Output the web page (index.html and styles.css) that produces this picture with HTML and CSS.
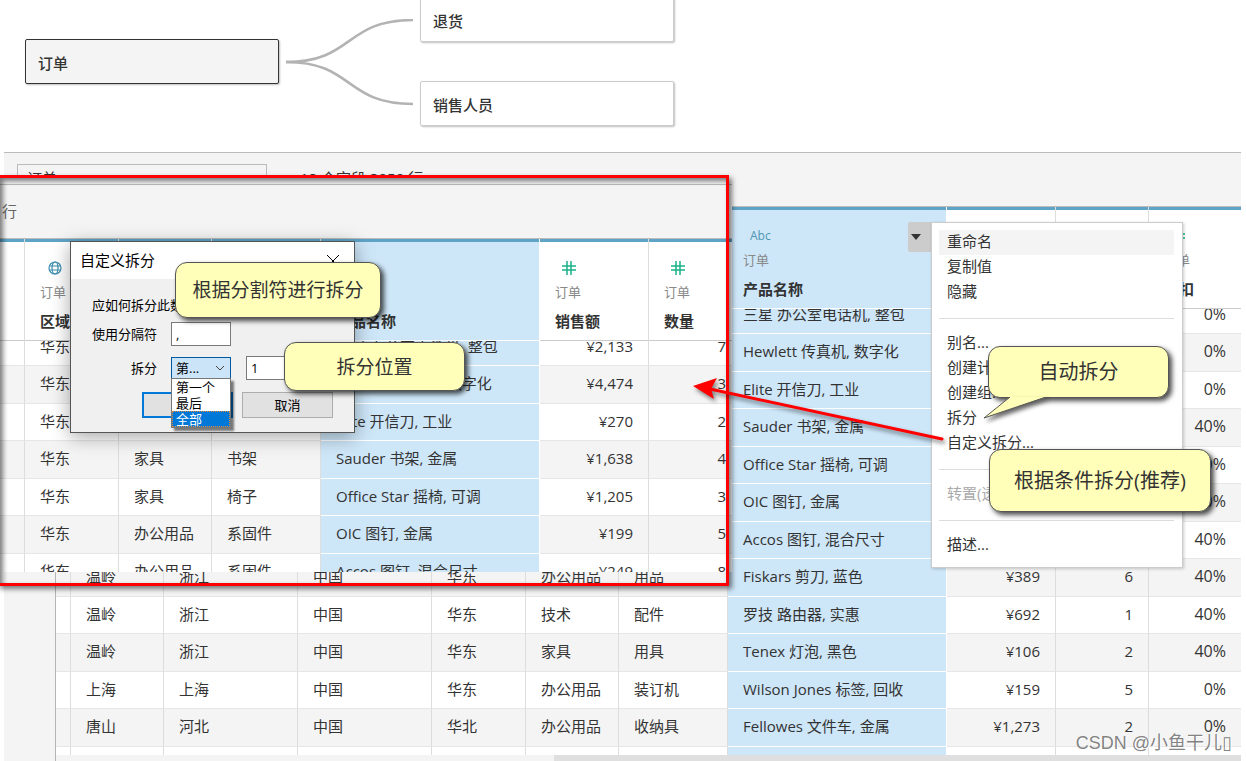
FILE: index.html
```html
<!DOCTYPE html>
<html lang="zh-CN">
<head>
    <meta charset="UTF-8">
    <meta name="viewport" content="width=device-width, initial-scale=1.0">
    <title>自定义拆分</title>
    <link rel="stylesheet" href="styles.css">
</head>
<body>
    <!-- Relationship canvas -->
    <div class="canvas">
        <svg class="noodles" width="130" height="90" viewBox="0 0 130 90">
            <path d="M2 43 C70 43 60 1 129 1"/>
            <path d="M2 43 C70 43 60 85 129 85"/>
        </svg>
        <div class="node node-main">订单</div>
        <div class="node node-returns">退货</div>
        <div class="node node-people">销售人员</div>
    </div>

    <!-- Data pane -->
    <div class="pane">
        <div class="pane-header">
            <div class="table-name">订单</div>
            <div class="row-count">18 个字段 3059 行</div>
        </div>
        <div class="grid-wrap">
            <table class="grid">
                <colgroup>
                    <col class="w15"><col class="w93"><col class="w134"><col class="w134"><col class="w94"><col class="w93"><col class="w109"><col class="w219"><col class="w109"><col class="w93"><col>
                </colgroup>
                <thead>
                    <tr>
                        <th></th><th></th><th></th><th></th><th></th><th></th><th></th>
                        <th class="sel">
                            <div class="type abc">Abc</div>
                            <div class="source">订单</div>
                            <div class="name">产品名称</div>
                        </th>
                        <th></th><th></th>
                        <th>
                            <div class="type"><svg width="14" height="14" viewBox="0 0 14 14" class="hash"><path d="M5 0v14M9 0v14M0 5h14M0 9h14"/></svg></div>
                            <div class="source">订单</div>
                            <div class="name">折扣</div>
                        </th>
                    </tr>
                </thead>
                <tbody>
                    <tr class="cut"><td></td><td></td><td></td><td></td><td></td><td></td><td></td><td class="sel"><span>三星 办公室电话机, 整包</span></td><td></td><td></td><td class="num pct"><span>0%</span></td></tr>
                    <tr><td></td><td></td><td></td><td></td><td></td><td></td><td></td><td class="sel">Hewlett 传真机, 数字化</td><td></td><td></td><td class="num pct">0%</td></tr>
                    <tr><td></td><td></td><td></td><td></td><td></td><td></td><td></td><td class="sel">Elite 开信刀, 工业</td><td></td><td></td><td class="num pct">0%</td></tr>
                    <tr><td></td><td></td><td></td><td></td><td></td><td></td><td></td><td class="sel">Sauder 书架, 金属</td><td></td><td></td><td class="num pct">40%</td></tr>
                    <tr><td></td><td></td><td></td><td></td><td></td><td></td><td></td><td class="sel">Office Star 摇椅, 可调</td><td></td><td></td><td class="num pct">40%</td></tr>
                    <tr><td></td><td></td><td></td><td></td><td></td><td></td><td></td><td class="sel">OIC 图钉, 金属</td><td></td><td></td><td class="num pct">40%</td></tr>
                    <tr><td></td><td></td><td></td><td></td><td></td><td></td><td></td><td class="sel">Accos 图钉, 混合尺寸</td><td></td><td></td><td class="num pct">40%</td></tr>
                    <tr><td></td><td>温岭</td><td>浙江</td><td>中国</td><td>华东</td><td>办公用品</td><td>用品</td><td class="sel">Fiskars 剪刀, 蓝色</td><td class="num">¥389</td><td class="num">6</td><td class="num pct">40%</td></tr>
                    <tr><td></td><td>温岭</td><td>浙江</td><td>中国</td><td>华东</td><td>技术</td><td>配件</td><td class="sel">罗技 路由器, 实惠</td><td class="num">¥692</td><td class="num">1</td><td class="num pct">40%</td></tr>
                    <tr><td></td><td>温岭</td><td>浙江</td><td>中国</td><td>华东</td><td>家具</td><td>用具</td><td class="sel">Tenex 灯泡, 黑色</td><td class="num">¥106</td><td class="num">2</td><td class="num pct">40%</td></tr>
                    <tr><td></td><td>上海</td><td>上海</td><td>中国</td><td>华东</td><td>办公用品</td><td>装订机</td><td class="sel">Wilson Jones 标签, 回收</td><td class="num">¥159</td><td class="num">5</td><td class="num pct">0%</td></tr>
                    <tr><td></td><td>唐山</td><td>河北</td><td>中国</td><td>华北</td><td>办公用品</td><td>收纳具</td><td class="sel">Fellowes 文件车, 金属</td><td class="num">¥1,273</td><td class="num">2</td><td class="num pct">0%</td></tr>
                    <tr class="tail"><td></td><td></td><td></td><td></td><td></td><td></td><td></td><td class="sel"></td><td></td><td></td><td></td></tr>
                </tbody>
            </table>
            <div class="scrollbar"><div class="thumb"></div></div>
        </div>
    </div>

    <!-- Column menu -->
    <button class="menu-toggle" type="button" aria-label="菜单"><svg width="10" height="6" viewBox="0 0 10 6"><path d="M0 0h10L5 6z" fill="#333"/></svg></button>
    <div class="menu" role="menu">
        <button type="button" class="hover">重命名</button>
        <button type="button">复制值</button>
        <button type="button">隐藏</button>
        <hr>
        <button type="button">别名...</button>
        <button type="button">创建计算字段...</button>
        <button type="button">创建组...</button>
        <button type="button">拆分</button>
        <button type="button">自定义拆分...</button>
        <hr>
        <button type="button" disabled>转置(透视)</button>
        <hr>
        <button type="button">描述...</button>
    </div>

    <!-- Inset with the split dialog -->
    <div class="inset">
        <div class="inset-header">行</div>
        <table class="grid">
            <colgroup>
                <col class="w25"><col class="w94"><col class="w93"><col class="w109"><col class="w219"><col class="w109"><col>
            </colgroup>
            <thead>
                <tr>
                    <th></th>
                    <th>
                        <div class="type"><svg width="16" height="14" viewBox="0 0 16 14" class="globe"><circle cx="8" cy="7" r="6"/><ellipse cx="8" cy="7" rx="3" ry="6"/><path d="M2 5h12M2 9h12"/></svg></div>
                        <div class="source">订单</div>
                        <div class="name">区域</div>
                    </th>
                    <th></th><th></th>
                    <th class="sel">
                        <div class="type"></div>
                        <div class="source"></div>
                        <div class="name">产品名称</div>
                    </th>
                    <th>
                        <div class="type"><svg width="14" height="14" viewBox="0 0 14 14" class="hash"><path d="M5 0v14M9 0v14M0 5h14M0 9h14"/></svg></div>
                        <div class="source">订单</div>
                        <div class="name">销售额</div>
                    </th>
                    <th>
                        <div class="type"><svg width="14" height="14" viewBox="0 0 14 14" class="hash"><path d="M5 0v14M9 0v14M0 5h14M0 9h14"/></svg></div>
                        <div class="source">订单</div>
                        <div class="name">数量</div>
                    </th>
                </tr>
            </thead>
            <tbody>
                <tr class="cut"><td></td><td><span>华东</span></td><td></td><td></td><td class="sel"><span>三星 办公室电话机, 整包</span></td><td class="num"><span>¥2,133</span></td><td class="num qty"><span>7</span></td></tr>
                <tr><td></td><td>华东</td><td></td><td></td><td class="sel">Hewlett 传真机, 数字化</td><td class="num">¥4,474</td><td class="num qty">3</td></tr>
                <tr><td></td><td>华东</td><td></td><td></td><td class="sel">Elite 开信刀, 工业</td><td class="num">¥270</td><td class="num qty">2</td></tr>
                <tr><td></td><td>华东</td><td>家具</td><td>书架</td><td class="sel">Sauder 书架, 金属</td><td class="num">¥1,638</td><td class="num qty">4</td></tr>
                <tr><td></td><td>华东</td><td>家具</td><td>椅子</td><td class="sel">Office Star 摇椅, 可调</td><td class="num">¥1,205</td><td class="num qty">3</td></tr>
                <tr><td></td><td>华东</td><td>办公用品</td><td>系固件</td><td class="sel">OIC 图钉, 金属</td><td class="num">¥199</td><td class="num qty">5</td></tr>
                <tr><td></td><td>华东</td><td>办公用品</td><td>系固件</td><td class="sel">Accos 图钉, 混合尺寸</td><td class="num">¥249</td><td class="num qty">8</td></tr>
            </tbody>
        </table>
    </div>

    <div class="dialog" role="dialog">
        <div class="dialog-title">
            <span>自定义拆分</span>
            <button type="button" class="close" aria-label="关闭"><svg width="14" height="14" viewBox="0 0 14 14"><path d="M1 1l12 12M13 1L1 13" stroke="#000"/></svg></button>
        </div>
        <form class="dialog-body">
            <p>应如何拆分此数据?</p>
            <div class="field">
                <label for="separator">使用分隔符</label>
                <input type="text" id="separator" value=",">
            </div>
            <div class="field">
                <label for="split">拆分</label>
                <div class="combo">
                    <select id="split"><option>第...</option></select>
                    <svg class="chevron" width="10" height="6" viewBox="0 0 10 6"><path d="M1 1l4 4 4-4"/></svg>
                    <ul class="options">
                        <li>第一个</li>
                        <li>最后</li>
                        <li class="picked">全部</li>
                    </ul>
                </div>
                <input type="text" id="count" class="count" aria-label="列" value="1">
            </div>
            <div class="actions">
                <button type="button" class="ok" aria-label="确定"></button>
                <button type="button">取消</button>
            </div>
        </form>
    </div>

    <!-- Annotations -->
    <div class="frame"></div>
    <div class="callout callout-delimiter">根据分割符进行拆分</div>
    <div class="callout callout-position">拆分位置</div>
    <div class="callout callout-auto">自动拆分
        <svg class="tail-shape" width="64" height="22" viewBox="0 0 64 22"><path d="M27 0L1 21L63 0" fill="#ffffb9" stroke="#555"/></svg>
    </div>
    <div class="callout callout-custom">根据条件拆分(推荐)</div>
    <svg class="arrow" width="260" height="76" viewBox="0 0 260 76">
        <path d="M20 17L252 67" stroke="#f00" stroke-width="3" stroke-linecap="round"/>
        <path d="M3 14L27 6L21 17L24 27z" fill="#f00"/>
    </svg>

    <div class="watermark">CSDN @小鱼干儿▯</div>
</body>
</html>
```
FILE: styles.css
```css
* {
    box-sizing: border-box;
}

body {
    position: relative;
    margin: 0;
    min-height: 100vh;
    overflow: hidden;
    background-color: #fff;
    color: #333;
    font-family: "Open Sans", "Noto Sans CJK SC", sans-serif;
    font-size: 15px;
    line-height: 24px;
}

button, input, select {
    font-family: inherit;
    color: inherit;
}

/* Relationship canvas */
.canvas {
    position: relative;
    height: 152px;
    overflow: hidden;
}

.node {
    position: absolute;
    width: 254px;
    height: 45px;
    padding: 0 12px;
    border: 1px solid #ccc;
    border-radius: 2px;
    background-color: #fff;
    box-shadow: 1px 1px 2px rgba(0, 0, 0, 0.25);
    font-weight: 500;
    line-height: 46px;
}

.node-main {
    left: 25px;
    top: 39px;
    border-color: #333;
    background-color: #f4f4f4;
}

.node-returns {
    left: 420px;
    top: -3px;
}

.node-people {
    left: 420px;
    top: 81px;
}

.noodles {
    position: absolute;
    left: 284px;
    top: 19px;
    fill: none;
    stroke: #b3b3b3;
    stroke-width: 2.5;
}

/* Data pane */
.pane {
    margin: 0 5px 0 4px;
    border-top: 1px solid #bbb;
    background-color: #f4f4f4;
}

.pane-header {
    display: flex;
    gap: 33px;
    height: 54px;
    padding: 11px 13px 0;
    border-bottom: 1px solid #bbb;
    overflow: hidden;
}

.table-name {
    width: 250px;
    height: 32px;
    padding: 0 9px;
    border: 1px solid #bbb;
    line-height: 26px;
}

.row-count {
    line-height: 28px;
}

.grid-wrap {
    margin-left: 51px;
    border-left: 1px solid #b5b5b5;
}

.grid {
    width: 100%;
    table-layout: fixed;
    border-collapse: separate;
    border-spacing: 0;
    background-color: #fff;
}

.w15 { width: 15px; }
.w25 { width: 25px; }
.w93 { width: 93px; }
.w94 { width: 94px; }
.w109 { width: 109px; }
.w134 { width: 134px; }
.w219 { width: 219px; }

.grid th {
    height: 102px;
    padding: 19px 0 0 15px;
    border-right: 1px solid #ddd;
    border-bottom: 1px solid #ccc;
    box-shadow: inset 0 3px 0 #5fa3c6;
    text-align: left;
    vertical-align: top;
    font-weight: normal;
}

.grid td {
    height: 37px;
    padding: 0 15px 3px;
    border-right: 1px solid #ddd;
    border-bottom: 1px solid #e6e6e6;
    white-space: nowrap;
}

.grid th:first-child,
.grid td:first-child {
    padding: 0;
}

.grid th:last-child,
.grid td:last-child {
    border-right: none;
}

.grid tbody tr:nth-child(even) td {
    height: 38px;
    background-color: #f4f4f4;
}

.grid tbody tr td.sel,
.grid tbody tr:nth-child(even) td.sel,
.grid th.sel {
    border-color: #fff;
    background-color: #cde6f8;
}

.grid .num {
    text-align: right;
}

.grid .pct {
    font-size: 16px;
}

/* First row is scrolled partly under the header */
.grid tr.cut td {
    height: 25px;
    padding-bottom: 0;
}

.cut span {
    display: flex;
    align-items: flex-end;
    height: 24px;
    overflow: hidden;
    line-height: 38px;
}

.cut .num span {
    justify-content: flex-end;
}

.grid tr.tail td {
    height: 8px;
    border-bottom: none;
}

.type {
    height: 20px;
    padding-left: 7px;
    line-height: 20px;
}

.type svg {
    display: block;
    position: relative;
    top: 3px;
}

.abc {
    color: #4d97b3;
    font-size: 12px;
}

.hash {
    fill: none;
    stroke: #1bb28a;
    stroke-width: 1.5;
}

.globe {
    fill: none;
    stroke: #3f8fb0;
    stroke-width: 1.2;
}

.source {
    height: 29px;
    color: #888;
    font-size: 13px;
    line-height: 28px;
}

.name {
    height: 30px;
    font-weight: bold;
    line-height: 28px;
}

.scrollbar {
    display: flex;
    justify-content: flex-end;
    height: 7px;
}

.thumb {
    width: 58%;
    background-color: #dfdfdf;
}

/* Column menu */
.menu-toggle {
    position: absolute;
    left: 908px;
    top: 222px;
    width: 25px;
    height: 30px;
    padding: 0 0 0 3px;
    border: none;
    border-radius: 2px;
    background-color: #ccc;
    text-align: left;
}

.menu-toggle svg {
    display: block;
}

.menu {
    position: absolute;
    left: 931px;
    top: 222px;
    width: 252px;
    padding: 7px 8px 9px 7px;
    border: 1px solid #ccc;
    background-color: #fff;
    box-shadow: 1px 1px 3px rgba(0, 0, 0, 0.2);
}

.menu button {
    display: block;
    width: 100%;
    height: 25px;
    padding: 0 8px 3px;
    border: none;
    background: none;
    font-size: 15px;
    line-height: 22px;
    text-align: left;
}

.menu button.hover {
    background-color: #f4f4f4;
}

.menu button:disabled {
    color: #aaa;
}

.menu hr {
    margin: 13px 0 12px;
    border: none;
    border-top: 1px solid #ddd;
}

/* Inset */
.inset {
    position: absolute;
    left: 0;
    top: 178px;
    width: 732px;
    height: 394px;
    overflow: hidden;
    background-color: #f4f4f4;
}

.inset-header {
    height: 55px;
    margin-top: 6px;
    padding-left: 2px;
    border-top: 1px solid #bbb;
    border-bottom: 1px solid #bbb;
    color: #666;
    line-height: 52px;
}

.grid .qty {
    padding-right: 6px;
}

/* Dialog */
.dialog {
    position: absolute;
    left: 70px;
    top: 241px;
    width: 285px;
    height: 192px;
    border: 1px solid #555;
    background-color: #f0f0f0;
    box-shadow: 0 4px 18px rgba(0, 0, 0, 0.35);
    color: #000;
    font-size: 13px;
}

.dialog-title {
    display: flex;
    justify-content: space-between;
    height: 37px;
    padding: 0 14px 0 9px;
    background-color: #fff;
    font-size: 15px;
    line-height: 37px;
}

.close {
    padding: 0;
    border: none;
    background: none;
}

.close svg {
    display: block;
}

.dialog-body {
    padding: 14px 21px 0;
}

.dialog-body p {
    margin: 0;
}

.field {
    display: flex;
    align-items: center;
    height: 34px;
}

.field label {
    width: 65px;
    margin-right: 14px;
    text-align: right;
}

.field input,
.field select {
    width: 60px;
    height: 24px;
    padding: 0 4px;
    border: 1px solid #7a7a7a;
    border-radius: 0;
    background-color: #fff;
    font-size: 13px;
}

.field select {
    display: block;
    height: 22px;
    appearance: none;
    border-color: #0058a0;
    background-color: #cce4f7;
}

.field .count {
    width: 80px;
    margin-left: 15px;
}

.combo {
    position: relative;
}

.chevron {
    position: absolute;
    right: 6px;
    top: 8px;
    fill: none;
    stroke: #444;
}

.options {
    position: absolute;
    left: 0;
    top: 21px;
    z-index: 1;
    width: 60px;
    margin: 0;
    padding: 0;
    border: 1px solid #777;
    background-color: #fff;
    box-shadow: 3px 3px 2px rgba(0, 0, 0, 0.5);
    list-style: none;
    line-height: 16px;
}

.options li {
    padding: 0 4px;
}

.options .picked {
    outline: 1px dotted #e08a3c;
    outline-offset: -1px;
    background-color: #0078d7;
    color: #fff;
}

.actions {
    display: flex;
    gap: 9px;
    margin-top: 7px;
    padding-left: 50px;
}

.actions button {
    width: 91px;
    height: 26px;
    padding: 0;
    border: 1px solid #adadad;
    background-color: #e1e1e1;
    font-size: 13px;
    line-height: 22px;
}

.actions .ok {
    border: 2px solid #0078d7;
}

/* Annotations */
.frame {
    position: absolute;
    left: -3px;
    top: 175px;
    width: 732px;
    height: 411px;
    border: 3px solid #f00;
    box-shadow: 3px 3px 5px rgba(0, 0, 0, 0.5), inset 3px 3px 5px rgba(0, 0, 0, 0.5);
}

.callout {
    position: absolute;
    display: flex;
    align-items: center;
    justify-content: center;
    border: 1px solid #555;
    border-radius: 12px;
    background-color: #ffffb9;
    box-shadow: 3px 3px 5px rgba(0, 0, 0, 0.7);
    font-size: 19px;
}

.callout-delimiter {
    left: 175px;
    top: 262px;
    width: 206px;
    height: 56px;
}

.callout-position {
    left: 284px;
    top: 342px;
    width: 181px;
    height: 49px;
}

.callout-auto {
    left: 988px;
    top: 346px;
    width: 181px;
    height: 52px;
    font-size: 20px;
}

.callout-custom {
    left: 989px;
    top: 449px;
    width: 222px;
    height: 63px;
    font-size: 20px;
}

.tail-shape {
    position: absolute;
    left: -6px;
    top: 50px;
    filter: drop-shadow(3px 3px 2px rgba(0, 0, 0, 0.6));
}

.arrow {
    position: absolute;
    left: 690px;
    top: 372px;
    filter: drop-shadow(2px 3px 2px rgba(0, 0, 0, 0.5));
}

.watermark {
    position: absolute;
    right: 14px;
    bottom: 7px;
    color: rgba(110, 110, 110, 0.85);
    font-family: "Liberation Sans", "Noto Sans CJK SC", "DejaVu Sans", sans-serif;
    font-size: 18px;
    text-shadow: 1px 1px 0 #fff;
}
```
